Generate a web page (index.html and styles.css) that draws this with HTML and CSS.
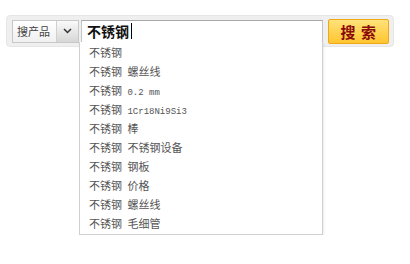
FILE: index.html
```html
<!DOCTYPE html>
<html lang="zh">
<head>
    <meta charset="UTF-8">
    <title>搜索</title>
    <link rel="stylesheet" href="styles.css">
</head>
<body>
    <div class="search-bar">
        <div class="type-select">
            <span class="type-label">搜产品</span>
            <span class="type-arrow">
                <svg width="9" height="6" viewBox="0 0 9 6"><polyline points="1,1 4.5,4.5 8,1" fill="none" stroke="#333" stroke-width="1.5"/></svg>
            </span>
        </div>
        <div class="query"><span class="query-text">不锈钢</span><span class="caret"></span></div>
        <button class="search-btn">搜 索</button>
    </div>
    <ul class="suggest">
        <li>不锈钢</li>
        <li>不锈钢 螺丝线</li>
        <li>不锈钢 <span class="latin">0.2 mm</span></li>
        <li>不锈钢 <span class="latin">1Cr18Ni9Si3</span></li>
        <li>不锈钢 棒</li>
        <li>不锈钢 不锈钢设备</li>
        <li>不锈钢 钢板</li>
        <li>不锈钢 价格</li>
        <li>不锈钢 螺丝线</li>
        <li>不锈钢 毛细管</li>
    </ul>
</body>
</html>
```

FILE: styles.css
```css
body { margin: 0; padding: 15px 0 0 6px; background: #fff; font-family: "Noto Sans CJK SC", "Noto Sans", sans-serif; font-size: 11px; color: #333; }
.search-bar { display: flex; align-items: center; width: 378px; height: 30px; padding: 0 4px; background: #efefef; border: 1px solid #e6e6e6; border-radius: 4px; }
.type-select { display: flex; height: 23px; margin-left: 1px; border: 1px solid #c8c8c8; box-sizing: border-box; background: linear-gradient(#fff, #f0f0f0); }
.type-label { width: 44px; line-height: 21px; padding-left: 4px; box-sizing: border-box; color: #444; border-right: 1px solid #d0d0d0; }
.type-arrow { width: 21px; display: flex; align-items: center; justify-content: center; background: linear-gradient(#fafafa, #d6d6d6); }
.query { margin-left: 2px; width: 244px; height: 23px; box-sizing: border-box; border: 1px solid #c4c4c4; border-top-color: #a8a8a8; background: #fff; display: flex; align-items: center; padding-left: 5px; }
.query-text { font-size: 14px; font-weight: bold; color: #111; line-height: 18px; }
.caret { width: 1px; height: 16px; background: #000; margin-left: 2px; }
.suggest { position: relative; width: 242px; margin: -5px 0 0 73px; padding: 1px 0; list-style: none; background: #fff; border: 1px solid #d0d0d0; border-top: none; box-shadow: 1px 1px 2px rgba(0,0,0,0.08); }
.suggest li { height: 19px; line-height: 19px; padding-left: 9px; color: #555; white-space: nowrap; word-spacing: 3px; }
.latin { font-family: "Liberation Mono", monospace; font-size: 9px; word-spacing: 0; }
.search-btn { margin-left: 5px; width: 61px; height: 25px; border: 1px solid #f0a818; border-radius: 2px; background: linear-gradient(#ffe27a, #ffc530); color: #8a0a0a; font-family: "Noto Sans CJK SC", sans-serif; font-size: 15px; font-weight: bold; letter-spacing: 1px; padding: 0; line-height: 21px; }
```
